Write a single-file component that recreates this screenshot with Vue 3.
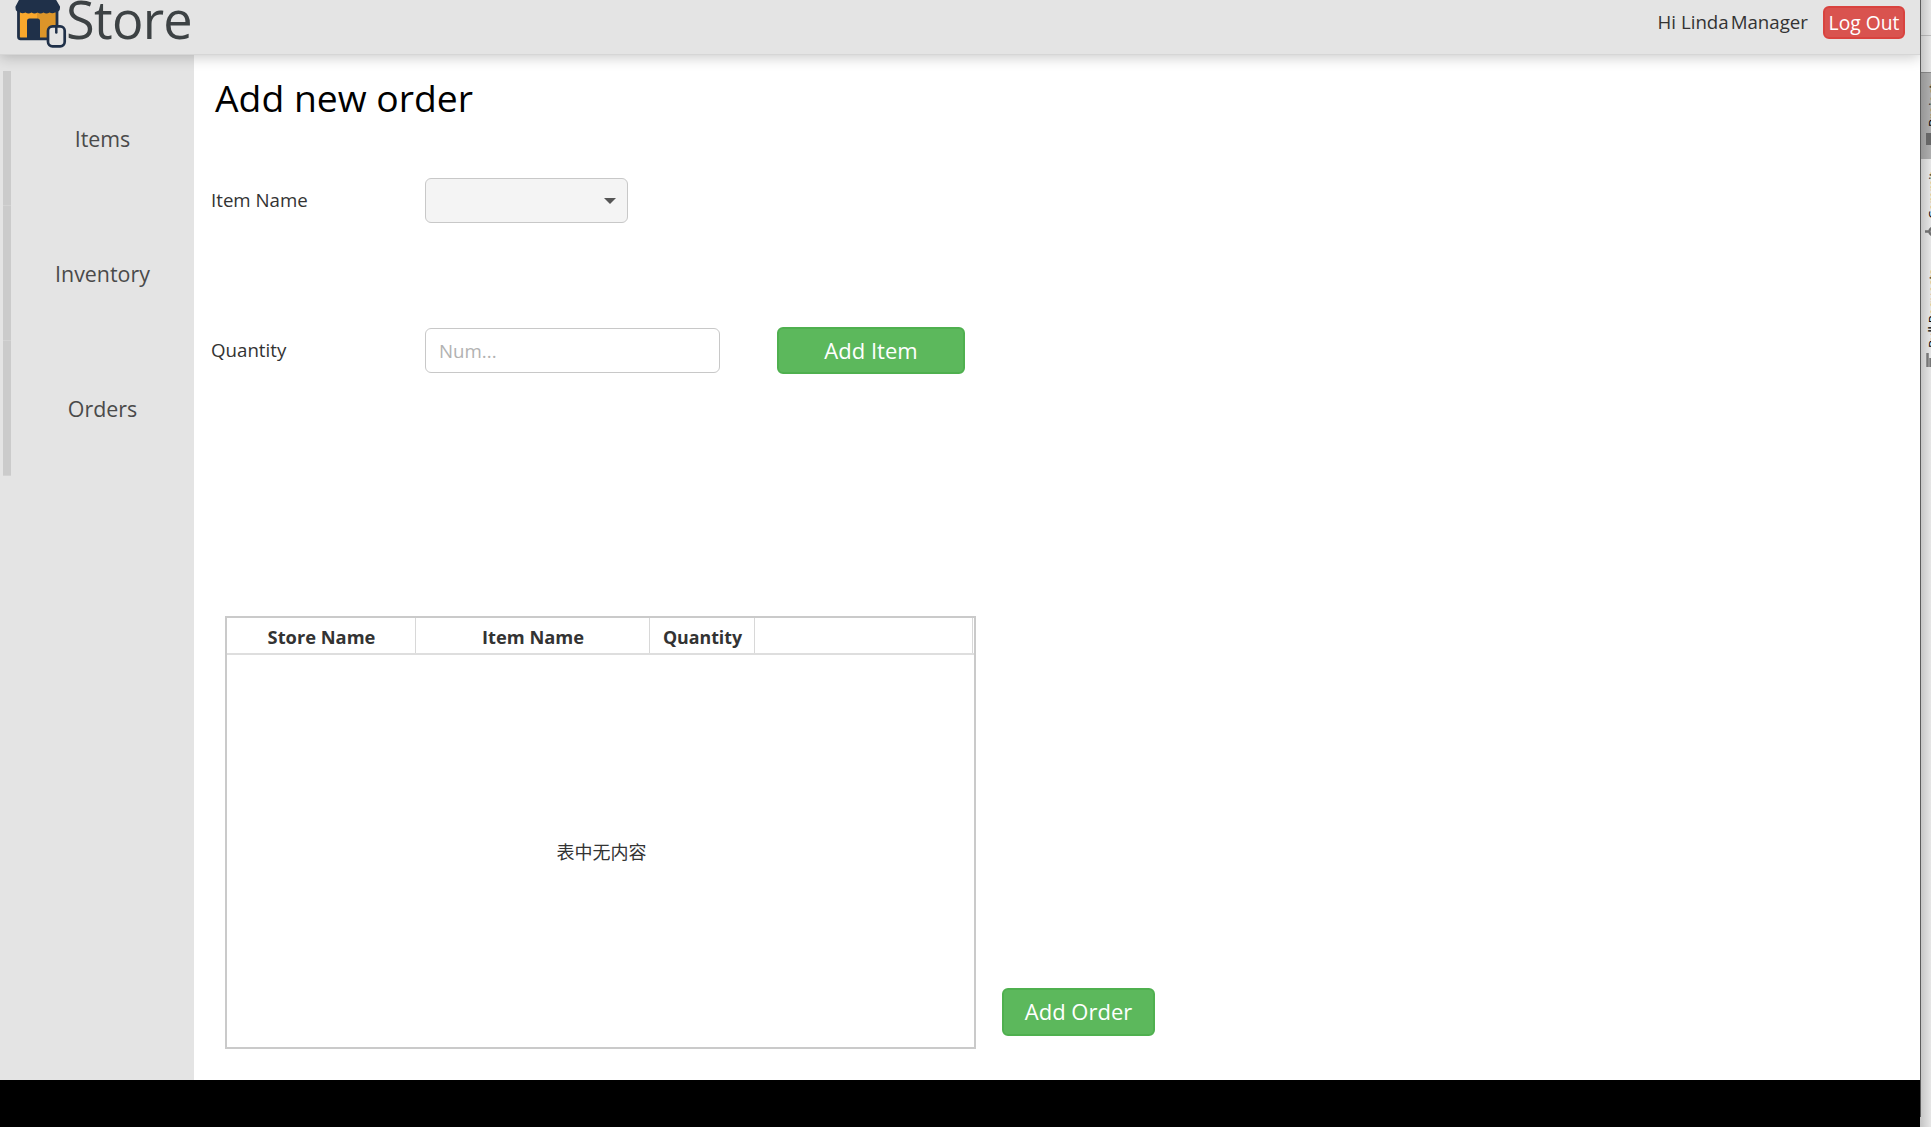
<script setup>
const navItems = ['Items', 'Inventory', 'Orders']
const columns = [
  { label: 'Store Name', width: 189, size: 18.3 },
  { label: 'Item Name', width: 234, size: 18.3 },
  { label: 'Quantity', width: 105, size: 17.8 },
  { label: '', width: 218, size: 18.3 },
]
</script>

<template>
  <div class="desktop">
    <div class="window">
      <header class="topbar">
        <div class="brand">
          <svg class="logo" width="68" height="50" viewBox="0 0 68 50">
            <rect x="18.5" y="6" width="38.5" height="32.8" rx="2" fill="#f9a72c" />
            <path d="M37 6h20v32.8H37z" fill="#dc9529" />
            <rect x="18.5" y="6" width="38.5" height="32.8" rx="2" fill="none" stroke="#1f3049" stroke-width="2.8" />
            <path d="M27 39V21q0-2.500 2.500-2.500h8q2.500 0 2.500 2.500v18z" fill="#1f3049" />
            <path d="M20-2h35l5 8.500q.5 5.500-5 6-2.500 1.500-5.500 0-3 2.200-6 0-3 2.200-6 0-3 2.200-6 0-3 2.200-6 0-3 1.500-5.500 0-5-.5-4.500-6z" fill="#1f3049" />
            <rect x="48" y="26.300" width="16.700" height="20" rx="4.500" fill="#e4e4e4" stroke="#1f3049" stroke-width="2.700" />
            <path d="M56.300 26v6.500" stroke="#1f3049" stroke-width="2.500" stroke-linecap="round" />
          </svg>
          <span class="brand-name">Store</span>
        </div>
        <div class="account">
          <span class="hello">Hi Linda</span>
          <span class="role">Manager</span>
          <button class="btn-logout">Log Out</button>
        </div>
      </header>

      <div class="body">
        <nav class="sidebar">
          <a v-for="item in navItems" :key="item" class="nav-item">
            <i class="nav-bar"></i>
            <span class="nav-label">{{ item }}</span>
          </a>
        </nav>

        <main class="content">
          <h1>Add new order</h1>
          <div class="row">
            <label>Item Name</label>
            <div class="select">
              <svg width="12" height="6" viewBox="0 0 12 6"><path d="M0 0h12L6 6z" fill="#555" /></svg>
            </div>
          </div>
          <div class="row row-quantity">
            <label>Quantity</label>
            <input class="field" placeholder="Num..." />
            <button class="btn btn-item">Add Item</button>
          </div>
          <div class="order">
            <div class="table">
              <div class="thead">
                <div
                  v-for="(col, i) in columns"
                  :key="i"
                  class="th"
                  :style="{ width: col.width + 'px', fontSize: col.size + 'px' }"
                >
                  {{ col.label }}
                </div>
              </div>
              <div class="empty">表中无内容</div>
            </div>
            <button class="btn btn-order">Add Order</button>
          </div>
        </main>
      </div>
      <div class="footer"></div>
    </div>

    <svg class="toolstrip" width="11" height="1127" viewBox="0 0 11 1127">
      <defs>
        <linearGradient id="shade" x1="0" x2="1" y1="0" y2="0">
          <stop offset="0" stop-color="#000" stop-opacity=".15" />
          <stop offset="1" stop-color="#000" stop-opacity="0" />
        </linearGradient>
      </defs>
      <rect width="11" height="1127" fill="#e6e6e6" />
      <rect y="35" width="11" height="1" fill="#bdbdbd" />
      <rect y="72" width="11" height="87" fill="#aeaeae" />
      <rect y="72" width="11" height="1" fill="#8c8c8c" />
      <rect width="11" height="1127" fill="url(#shade)" />
      <rect width="1" height="1117" fill="#5c5c5c" />
      <g class="tool-text">
        <text transform="translate(18 127) rotate(-90)" textLength="43">Project</text>
        <text transform="translate(18 219) rotate(-90)" textLength="47">Commit</text>
        <text transform="translate(18 348) rotate(-90)" textLength="79">Pull Requests</text>
      </g>
      <rect x="6" y="133" width="5" height="12" fill="#666" />
      <path d="M5 231.500h4M11.500 228a4 4 0 0 0 0 7" fill="none" stroke="#6e6e6e" stroke-width="2.500" />
      <path d="M7.500 353v14M10.500 358v9" stroke="#777" stroke-width="2.500" fill="none" />
    </svg>
  </div>
</template>

<style>
body {
  margin: 0;
  overflow: hidden;
}
</style>

<style scoped>
.desktop {
  display: flex;
  width: 1931px;
  height: 1127px;
  overflow: hidden;
  background: #fff;
  font-family: "Open Sans", "Noto Sans", "Noto Sans CJK SC", sans-serif;
  font-size: 18.7px;
  color: #333;
}
.window {
  display: flex;
  flex-direction: column;
  width: 1920px;
  flex: none;
}
.toolstrip {
  flex: none;
}
.tool-text {
  font-size: 13px;
  fill: #000;
}
.topbar {
  box-sizing: border-box;
  z-index: 1;
  position: relative;
  display: flex;
  justify-content: space-between;
  height: 55px;
  flex: none;
  background: #e4e4e4;
  border-bottom: 1px solid #d6d6d6;
  box-shadow: 0 2px 13px rgba(0, 0, 0, 0.22);
  clip-path: inset(0 0 -20px 0);
}
.brand {
  display: flex;
  height: 54px;
}
.logo {
  flex: none;
}
.brand-name {
  height: 54px;
  line-height: 38px;
  margin-left: -2px;
  font-size: 52.3px;
  letter-spacing: -0.7px;
  color: #3d4244;
}
.account {
  display: flex;
  align-items: center;
  height: 44px;
  padding-right: 15px;
}
.role {
  margin: 0 15px 0 1px;
}
.hello {
  margin-right: 1px;
}
.hello,
.role {
  padding-bottom: 2px;
}
button {
  box-sizing: border-box;
  padding: 0 0 1.5px;
  font-family: inherit;
  color: #fff;
  flex: none;
}
.btn-logout {
  width: 82px;
  height: 33px;
  padding-bottom: 0;
  border: 2px solid #d9433f;
  border-radius: 6px;
  background: #d9534f;
  font-size: 19.3px;
  margin-top: 1px;
}
.body {
  display: flex;
  height: 1025px;
}
.sidebar {
  width: 194px;
  flex: none;
  padding-top: 15.5px;
  box-sizing: border-box;
  background: #e4e4e4;
}
.nav-item {
  display: flex;
  height: 135px;
  padding-left: 3px;
}
.nav-bar {
  width: 8px;
  background: #cbcbcb;
  border-bottom: 1px solid #d3d3d3;
  box-sizing: border-box;
}
.nav-label {
  flex: 1;
  line-height: 135px;
  text-align: center;
  font-size: 21.4px;
  color: #4a4a4a;
}
.content {
  flex: 1;
  padding-left: 17px;
}
h1 {
  margin: 22px 0 0 4px;
  height: 101px;
  line-height: 42px;
  font-size: 37.3px;
  font-weight: 400;
  color: #000;
}
.row {
  display: flex;
  align-items: center;
  height: 45px;
}
.row-quantity {
  margin-top: 105px;
}
label {
  width: 214px;
  padding-bottom: 2px;
}
.select {
  box-sizing: border-box;
  display: flex;
  align-items: center;
  justify-content: flex-end;
  width: 203px;
  height: 45px;
  padding-right: 11px;
  border: 1.5px solid #c8c8c8;
  border-radius: 6px;
  background: #f4f4f4;
}
.field {
  box-sizing: border-box;
  width: 295px;
  height: 45px;
  padding: 0 13px 1px;
  border: 1.5px solid #c8c8c8;
  border-radius: 6px;
  background: #fff;
  font: inherit;
}
.field::placeholder {
  color: #b2b2b2;
}
.btn {
  border: 2px solid #4fb04f;
  border-radius: 6px;
  background: #5cb85c;
  font-size: 22px;
}
.btn-item {
  width: 188px;
  height: 47px;
  margin-left: 57px;
}
.order {
  display: flex;
  align-items: flex-end;
  margin: 243px 0 0 14px;
}
.table {
  box-sizing: border-box;
  width: 751px;
  height: 433px;
  border: 2px solid #cacaca;
}
.thead {
  display: flex;
  box-sizing: border-box;
  height: 37px;
  border-bottom: 2px solid #dedede;
}
.th {
  box-sizing: border-box;
  flex: none;
  border-right: 1.5px solid #d8d8d8;
  padding-left: 1px;
  line-height: 38px;
  text-align: center;
  font-weight: 700;
  white-space: nowrap;
}
.empty {
  display: flex;
  align-items: center;
  justify-content: center;
  height: 391px;
  padding-left: 2px;
  font-family: "Noto Sans CJK SC", sans-serif;
  font-size: 18px;
}
.btn-order {
  width: 153px;
  height: 48px;
  margin: 0 0 13px 26px;
}
.footer {
  flex: 1;
  background: #000;
}
</style>
